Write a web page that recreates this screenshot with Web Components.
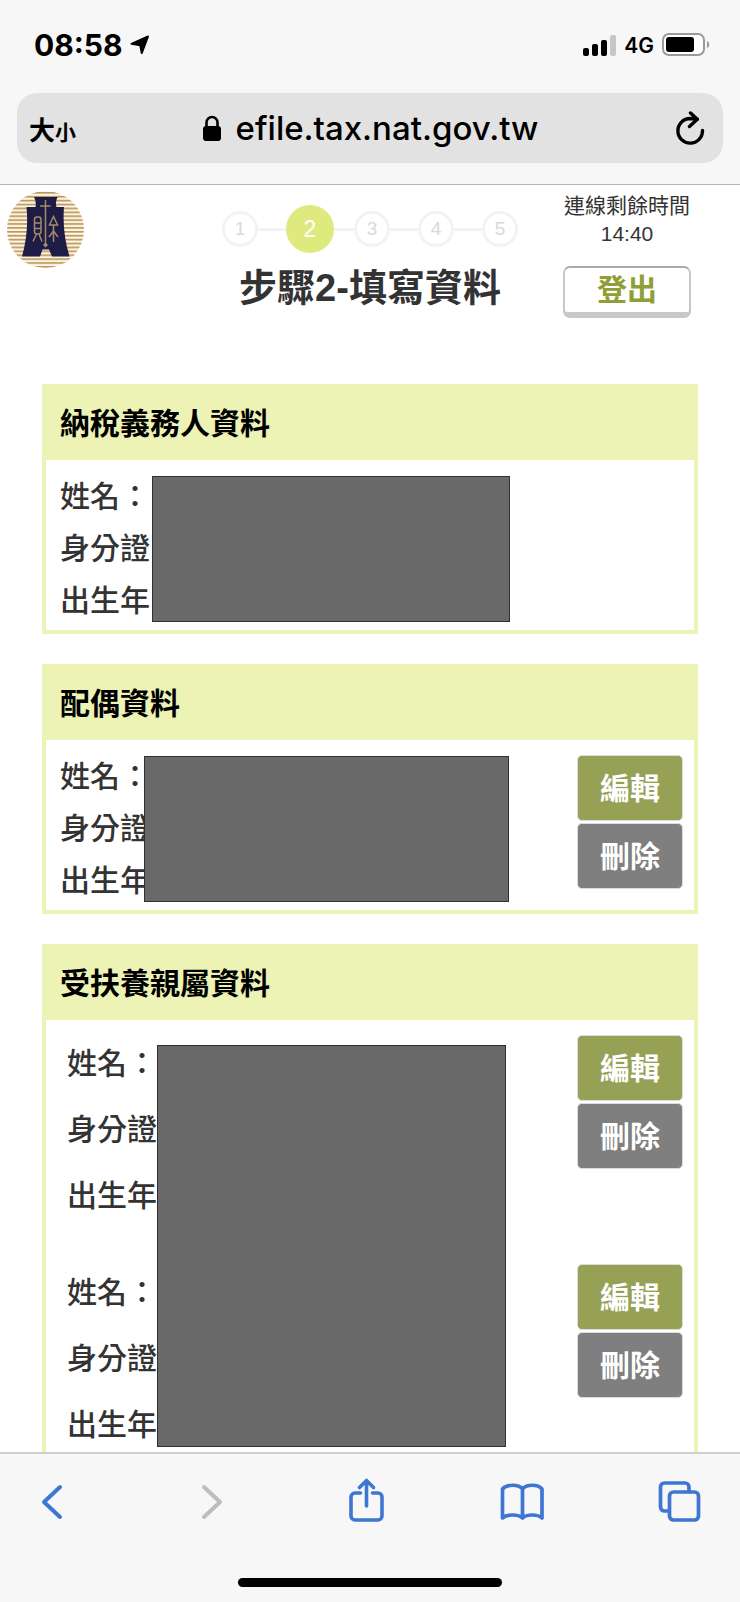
<!DOCTYPE html>
<html lang="zh-Hant">
<head>
<meta charset="utf-8">
<meta name="viewport" content="width=device-width, initial-scale=1">
<title>步驟2-填寫資料</title>
<style>
    body {
        margin: 0;
        background: #fff;
        color: #333;
        font-family: "Liberation Sans", "Noto Sans CJK TC", sans-serif;
    }
</style>
</head>
<body>
<phone-screen>
    <status-bar slot="top" time="08:58" network="4G"></status-bar>
    <address-bar slot="top" host="efile.tax.nat.gov.tw"></address-bar>

    <filing-header time="14:40">
        <step-list slot="steps" total="5" current="2"></step-list>
        <span slot="title">步驟2-填寫資料</span>
    </filing-header>

    <data-card heading="納稅義務人資料">
        <person-entry style="--mask-left: 106px; --mask-width: 358px"></person-entry>
    </data-card>

    <data-card heading="配偶資料">
        <person-entry editable style="--mask-left: 98px; --mask-width: 365px"></person-entry>
    </data-card>

    <data-card heading="受扶養親屬資料" masked>
        <person-entry editable roomy></person-entry>
        <person-entry editable roomy></person-entry>
    </data-card>

    <tool-bar slot="bottom"></tool-bar>
</phone-screen>

<script>
class PhoneScreen extends HTMLElement {

    constructor() {
        super();
        this.shadow = this.attachShadow({mode: 'open'});
        this.render()
    }

    render() {
        this.shadow.innerHTML =
        `
            <slot name="top"></slot>
            <main><slot></slot></main>
            <slot name="bottom"></slot>

            <style>
                :host {
                    display: flex;
                    flex-direction: column;
                    height: 100vh;
                }
                main {
                    flex: 1;
                    min-height: 0;
                    overflow-y: auto;
                    scrollbar-width: none;
                }
            </style>
        `
    }
}


class StatusBar extends HTMLElement {

    constructor() {
        super();
        this.shadow = this.attachShadow({mode: 'open'});
    }

    connectedCallback() {
        this.render()
    }

    render() {
        this.shadow.innerHTML =
        `
            <div class="left">
                <span class="time">${this.getAttribute('time')}</span>
                <svg width="20" height="20" viewBox="0 0 20 20" aria-hidden="true">
                    <path d="M1.500 8.800 18 1.500 11.800 18 10.200 10.200z" stroke="#000" stroke-width="2" stroke-linejoin="round"/>
                </svg>
            </div>
            <div class="right">
                <svg width="33" height="21" viewBox="0 0 33 21" aria-hidden="true">
                    <rect x="0" y="13" width="6" height="8" rx="2"/>
                    <rect x="9" y="9" width="6" height="12" rx="2"/>
                    <rect x="18" y="5" width="6" height="16" rx="2"/>
                    <rect x="27" y="0" width="6" height="21" rx="2" fill="#c6c6c6"/>
                </svg>
                <span class="network">${this.getAttribute('network')}</span>
                <svg width="48" height="24" viewBox="0 0 48 24" aria-hidden="true">
                    <rect x="1" y="1" width="41" height="21" rx="6" fill="#fff" stroke="#9a9a9a" stroke-width="2"/>
                    <rect x="4" y="4" width="28" height="15" rx="3"/>
                    <path d="M45 8c3 1 3 6 0 7z" fill="#9a9a9a"/>
                </svg>
            </div>

            <style>
                :host {
                    display: flex;
                    justify-content: space-between;
                    align-items: center;
                    height: 90px;
                    padding: 0 30px 0 34px;
                    background: #f7f7f7;
                    color: #000;
                    font-family: Inter, "Liberation Sans", sans-serif;
                }
                .left, .right {
                    display: flex;
                    align-items: center;
                    gap: 8px;
                }
                .time {
                    font-size: 30px;
                    font-weight: 700;
                }
                .network {
                    font-size: 21px;
                    font-weight: 600;
                }
            </style>
        `
    }
}


class AddressBar extends HTMLElement {

    constructor() {
        super();
        this.shadow = this.attachShadow({mode: 'open'});
    }

    connectedCallback() {
        this.render()
    }

    render() {
        this.shadow.innerHTML =
        `
            <div class="field">
                <button class="text-size">大<small>小</small></button>
                <button class="host">
                    <svg width="20" height="26" viewBox="0 0 20 26" aria-hidden="true">
                        <rect x="1" y="11" width="18" height="15" rx="3"/>
                        <path d="M4.500 12V7.500a5.500 5.500 0 0 1 11 0V12" fill="none" stroke="#000" stroke-width="2.600"/>
                    </svg>
                    <span>${this.getAttribute('host')}</span>
                </button>
                <button class="reload" aria-label="重新載入">
                    <svg width="30" height="34" viewBox="0 0 30 34" fill="none" stroke="#000" stroke-width="3.400" stroke-linecap="round" stroke-linejoin="round">
                        <path d="M27.500 19.500A12.300 12.300 0 1 1 15.200 7.500L22 8.300"/>
                        <path d="M15.500 2 22.300 8.300 14.500 15.500"/>
                    </svg>
                </button>
            </div>

            <style>
                :host {
                    display: block;
                    padding: 3px 17px 21px;
                    background: #f7f7f7;
                    border-bottom: 1px solid #b5b5b5;
                }
                .field {
                    display: grid;
                    grid-template-columns: 1fr auto 1fr;
                    align-items: center;
                    height: 70px;
                    padding: 0 18px 0 12px;
                    box-sizing: border-box;
                    border-radius: 20px;
                    background: #e2e2e2;
                }
                button {
                    padding: 0;
                    border: none;
                    background: none;
                    color: #000;
                    cursor: pointer;
                }
                .text-size {
                    justify-self: start;
                    font: 700 26px "Noto Sans CJK TC", sans-serif;
                }
                .text-size small {
                    font-size: 21px;
                }
                .host {
                    display: flex;
                    align-items: center;
                    gap: 14px;
                    padding-left: 6px;
                    font: 500 33px Inter, "Liberation Sans", sans-serif;
                }
                .reload {
                    display: flex;
                    justify-self: end;
                }
            </style>
        `
    }
}


class FilingHeader extends HTMLElement {

    constructor() {
        super();
        this.shadow = this.attachShadow({mode: 'open'});
    }

    connectedCallback() {
        this.render()
    }

    render() {
        this.shadow.innerHTML =
        `
            <svg class="logo" width="77" height="77" viewBox="0 0 77 77" role="img" aria-label="財政部">
                <defs>
                    <pattern id="stripes" width="77" height="3.900" patternUnits="userSpaceOnUse">
                        <rect width="77" height="3.900" fill="#fdf5e0"/>
                        <rect y="1" width="77" height="1.600" fill="#b8935c"/>
                    </pattern>
                </defs>
                <circle cx="38.500" cy="38.500" r="38.500" fill="url(#stripes)"/>
                <path d="M27 6H50.500Q48 11 49.500 16H57Q55 41 62.500 65.500H45L42 58.500H35.500L33 65.500H15Q22 41 19.500 16H28.500Q29.500 11 27 6z" fill="#1d1c47"/>
                <g fill="none" stroke="#a58a68" stroke-width="1.500">
                    <path d="M38.500 9V55M33 15H43.500"/>
                    <path d="M38.500 52.500 40 54 38.500 55.500 37 54z" fill="#a58a68"/>
                    <rect x="27.500" y="26" width="6.500" height="17" rx="2.500"/>
                    <path d="M27.500 32H34M27.500 37.500H34M29.500 43 26 50.500M32 43 35 50.500"/>
                    <path d="M46.500 25.500 42.500 34H50.500zM46.500 34V51M42 46 46.500 40 51 46"/>
                </g>
            </svg>
            <div class="progress">
                <slot name="steps"></slot>
                <h1><slot name="title"></slot></h1>
            </div>
            <div class="session">
                <span>連線剩餘時間</span>
                <time>${this.getAttribute('time')}</time>
                <button>登出</button>
            </div>

            <style>
                :host {
                    display: grid;
                    grid-template-columns: 1fr auto 1fr;
                    align-items: start;
                    padding: 6px 49px 66px 7px;
                }
                .progress {
                    display: flex;
                    flex-direction: column;
                    align-items: center;
                    padding: 14px 0 0 42px;
                }
                h1 {
                    margin: 10px 0 0;
                    font-size: 38px;
                    line-height: 50px;
                    font-weight: 700;
                }
                .session {
                    display: flex;
                    flex-direction: column;
                    align-items: center;
                    justify-self: end;
                    padding-top: 1px;
                    font-size: 21px;
                    line-height: 28px;
                }
                button {
                    width: 128px;
                    height: 52px;
                    margin-top: 18px;
                    padding: 0;
                    border: 2px solid #c8c8c8;
                    border-top-color: #aaa;
                    border-bottom-width: 6px;
                    border-radius: 7px;
                    background: #fff;
                    color: #8f9f37;
                    font: inherit;
                    font-size: 30px;
                    font-weight: 700;
                    cursor: pointer;
                }
            </style>
        `
    }
}


class StepList extends HTMLElement {

    constructor() {
        super();
        this.shadow = this.attachShadow({mode: 'open'});
    }

    connectedCallback() {
        this.render()
    }

    render() {
        const total = Number(this.getAttribute('total'))
        const current = Number(this.getAttribute('current'))
        let items = ""

        for (let i = 1; i <= total; i++) {
            items += i === current ? `<li class="current" aria-current="step">${i}</li>` : `<li>${i}</li>`
            if (i < total) {
                items += `<li class="line${i === current ? " short" : ""}" role="presentation"></li>`
            }
        }

        this.shadow.innerHTML =
        `
            <ol>${items}</ol>

            <style>
                ol {
                    display: flex;
                    align-items: center;
                    margin: 0;
                    padding: 0;
                    list-style: none;
                }
                li {
                    display: flex;
                    align-items: center;
                    justify-content: center;
                    width: 36px;
                    height: 36px;
                    box-sizing: border-box;
                    border: 3px solid #f3f3f3;
                    border-radius: 50%;
                    color: #d9d9d9;
                    font-size: 19px;
                }
                .current {
                    width: 48px;
                    height: 48px;
                    border: none;
                    background: #deea7d;
                    color: #fff;
                    font-size: 23px;
                }
                .line {
                    width: 28px;
                    height: 3px;
                    border: none;
                    border-radius: 0;
                    background: #f3f3f3;
                }
                .short {
                    width: 20px;
                }
            </style>
        `
    }
}


class DataCard extends HTMLElement {

    constructor() {
        super();
        this.shadow = this.attachShadow({mode: 'open'});
    }

    connectedCallback() {
        this.render()
    }

    render() {
        this.shadow.innerHTML =
        `
            <h2>${this.getAttribute('heading')}</h2>
            <div class="body">
                <slot></slot>
                ${this.hasAttribute('masked') ? '<div class="mask"></div>' : ''}
            </div>

            <style>
                :host {
                    display: block;
                    margin: 0 42px 30px;
                    border: 4px solid #ecf3b4;
                    border-top: none;
                }
                h2 {
                    margin: 0;
                    padding: 18px 14px 14px;
                    background: #ecf3b4;
                    color: #000;
                    font-size: 30px;
                    line-height: 44px;
                    font-weight: 700;
                }
                .body {
                    position: relative;
                    display: grid;
                    gap: 20px;
                }
                /* one cover over every entry of the card */
                .mask {
                    position: absolute;
                    top: 25px;
                    bottom: 11px;
                    left: 111px;
                    width: 349px;
                    box-sizing: border-box;
                    border: 1px solid #303030;
                    background: #696969;
                }
            </style>
        `
    }
}


class PersonEntry extends HTMLElement {

    constructor() {
        super();
        this.shadow = this.attachShadow({mode: 'open'});
    }

    connectedCallback() {
        this.render()
    }

    render() {
        const editable = this.hasAttribute('editable')
        const roomy = this.hasAttribute('roomy')

        this.shadow.innerHTML =
        `
            <div class="fields">
                <div>姓名：</div>
                <div>身分證</div>
                <div>出生年</div>
            </div>
            ${editable ? '<div class="actions"><button class="edit">編輯</button><button>刪除</button></div>' : ''}
            ${roomy ? '' : '<div class="mask"></div>'}

            <style>
                :host {
                    position: relative;
                    display: flex;
                    justify-content: space-between;
                    align-items: flex-start;
                    padding: 0 11px 0 14px;
                }
                :host([roomy]) {
                    padding-left: 21px;
                }
                .fields {
                    padding: 11px 0 3px;
                    font-size: 30px;
                    line-height: 52px;
                    font-weight: 500;
                }
                :host([roomy]) .fields {
                    padding: 11px 0 0;
                    line-height: 66px;
                }
                .actions {
                    display: grid;
                    gap: 2px;
                    padding-top: 15px;
                }
                button {
                    width: 106px;
                    height: 66px;
                    padding: 0 0 5px;
                    border: 1px solid #dcdcdc;
                    border-radius: 5px;
                    background: #7f7f7f;
                    color: #fff;
                    font: inherit;
                    font-size: 30px;
                    font-weight: 700;
                    cursor: pointer;
                }
                .edit {
                    background: #96a156;
                }
                .mask {
                    position: absolute;
                    top: 16px;
                    bottom: 8px;
                    left: var(--mask-left);
                    width: var(--mask-width);
                    box-sizing: border-box;
                    border: 1px solid #303030;
                    background: #696969;
                }
            </style>
        `
    }
}


class ToolBar extends HTMLElement {

    constructor() {
        super();
        this.shadow = this.attachShadow({mode: 'open'});
        this.render()
    }

    render() {
        this.shadow.innerHTML =
        `
            <nav>
                <button aria-label="上一頁">
                    <svg viewBox="0 0 48 48" stroke-width="4">
                        <path d="M32 9 16 24 32 39"/>
                    </svg>
                </button>
                <button aria-label="下一頁" disabled>
                    <svg viewBox="0 0 48 48" stroke-width="4">
                        <path d="M19 9 35 24 19 39"/>
                    </svg>
                </button>
                <button aria-label="分享">
                    <svg viewBox="0 0 48 48" stroke-width="3.600">
                        <path d="M18.500 15H13a4 4 0 0 0-4 4V38a4 4 0 0 0 4 4H36a4 4 0 0 0 4-4V19a4 4 0 0 0-4-4H30.500"/>
                        <path d="M24.500 28V3M17.500 9.500 24.500 2.500 31.500 9.500"/>
                    </svg>
                </button>
                <button aria-label="書籤">
                    <svg viewBox="0 0 48 48" stroke-width="3.700">
                        <path d="M23.500 11C19.500 6 8 6 3.500 11V40C8 36 19.500 36 23.500 40C27.500 36 39 36 43 40V11C39 6 27.500 6 23.500 11zM23.500 11V40"/>
                    </svg>
                </button>
                <button aria-label="分頁">
                    <svg viewBox="0 0 48 48" stroke-width="3.700">
                        <path d="M13 33H8.500a4 4 0 0 1-4-4V9a4 4 0 0 1 4-4H29a4 4 0 0 1 4 4V13.500"/>
                        <rect x="13.500" y="14" width="29" height="28" rx="4"/>
                    </svg>
                </button>
            </nav>
            <div class="home"></div>

            <style>
                :host {
                    display: block;
                    padding-bottom: 15px;
                    border-top: 2px solid #cfcfcf;
                    background: #f7f7f7;
                }
                nav {
                    display: flex;
                    justify-content: space-between;
                    padding: 24px 36px 52px 28px;
                }
                button {
                    display: flex;
                    padding: 0;
                    border: none;
                    background: none;
                    color: #3f76d4;
                    cursor: pointer;
                }
                button:disabled {
                    color: #bdbdbd;
                }
                svg {
                    width: 48px;
                    height: 48px;
                    fill: none;
                    stroke: currentColor;
                    stroke-linecap: round;
                    stroke-linejoin: round;
                }
                .home {
                    width: 264px;
                    height: 9px;
                    margin: 0 auto;
                    border-radius: 5px;
                    background: #000;
                }
            </style>
        `
    }
}


customElements.define('phone-screen', PhoneScreen);
customElements.define('status-bar', StatusBar);
customElements.define('address-bar', AddressBar);
customElements.define('filing-header', FilingHeader);
customElements.define('step-list', StepList);
customElements.define('data-card', DataCard);
customElements.define('person-entry', PersonEntry);
customElements.define('tool-bar', ToolBar);
</script>
</body>
</html>
